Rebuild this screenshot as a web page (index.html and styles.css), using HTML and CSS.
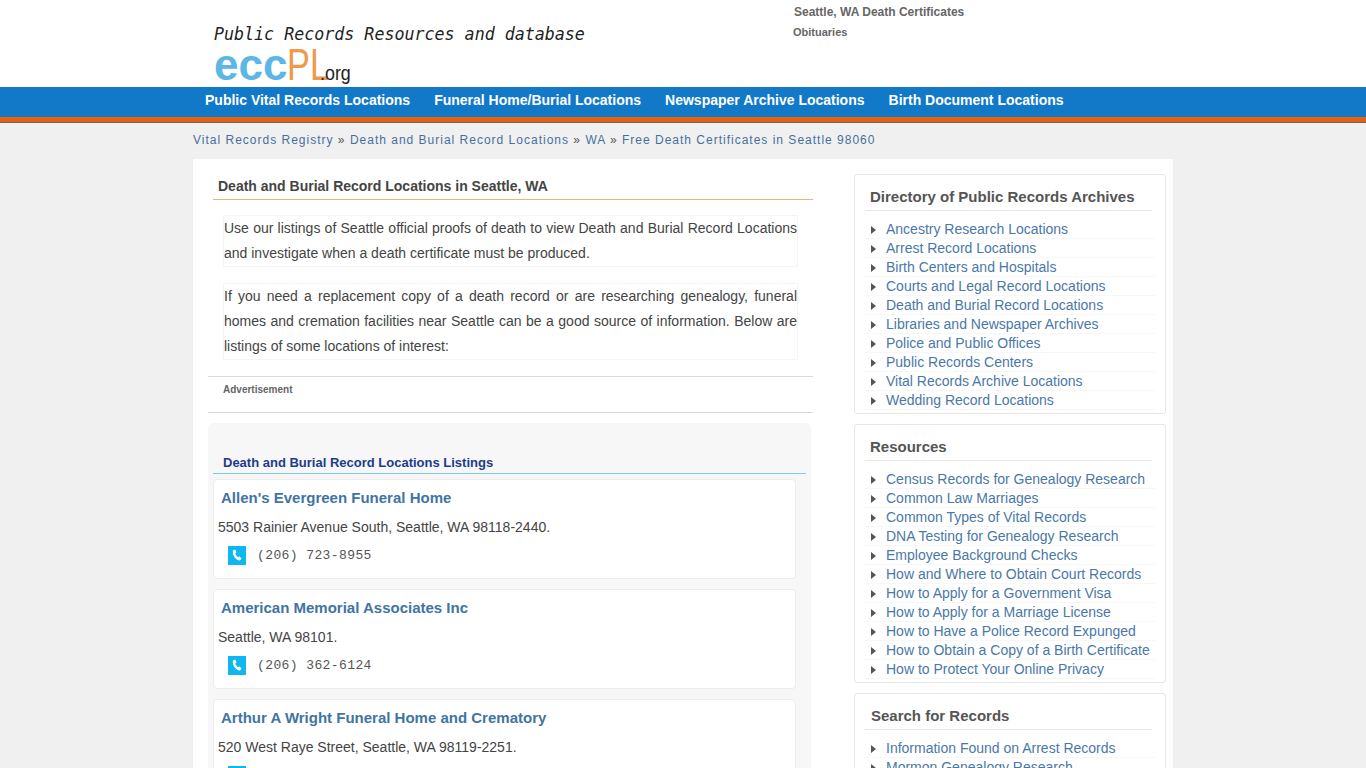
FILE: index.html
```html
<!DOCTYPE html>
<html lang="en">
<head>
    <meta charset="UTF-8">
    <title>Free Death Certificates in Seattle 98060</title>
    <link rel="stylesheet" href="styles.css">
</head>
<body>
    <div class="header">
        <div class="logo">
            <div class="logo-tag">Public Records Resources and database</div>
            <div class="logo-name"><span class="logo-ecc">ecc</span><span class="logo-pl">PL</span><span class="logo-org">.org</span></div>
        </div>
        <div class="top-links">
            <a class="top-link-a" href="#">Seattle, WA Death Certificates</a>
            <a class="top-link-b" href="#">Obituaries</a>
        </div>
    </div>

    <div class="nav">
        <div class="nav-inner">
            <a href="#">Public Vital Records Locations</a>
            <a href="#">Funeral Home/Burial Locations</a>
            <a href="#">Newspaper Archive Locations</a>
            <a href="#">Birth Document Locations</a>
        </div>
    </div>

    <div class="crumbs">
        <a href="#">Vital Records Registry</a> <span>»</span>
        <a href="#">Death and Burial Record Locations</a> <span>»</span>
        <a href="#">WA</a> <span>»</span>
        <a href="#">Free Death Certificates in Seattle 98060</a>
    </div>

    <div class="page">
        <div class="main">
            <h1 class="main-title">Death and Burial Record Locations in Seattle, WA</h1>
            <div class="intro">
                <p>Use our listings of Seattle official proofs of death to view Death and Burial Record Locations and investigate when a death certificate must be produced.</p>
            </div>
            <div class="intro">
                <p>If you need a replacement copy of a death record or are researching genealogy, funeral homes and cremation facilities near Seattle can be a good source of information. Below are listings of some locations of interest:</p>
            </div>
            <div class="ad">Advertisement</div>

            <div class="listings">
                <h2 class="listings-title">Death and Burial Record Locations Listings</h2>

                <div class="card">
                    <h3><a href="#">Allen's Evergreen Funeral Home</a></h3>
                    <div class="addr">5503 Rainier Avenue South, Seattle, WA 98118-2440.</div>
                    <div class="phone">
                        <svg class="phone-icon" viewBox="0 0 18 19"><rect width="18" height="19" fill="#0db7ef"/><path d="M5.2 4.2l2-.7 1.3 3-1.3 1c.5 1.500 1.500 2.800 2.900 3.700l1.200-.9 2.300 2.200-1.400 1.700c-.6.400-1.500.3-2.400-.2-2.800-1.600-4.600-4.300-5-7.300-.1-1.100 0-2 .4-2.500z" fill="#fff"/></svg>
                        <span>(206) 723-8955</span>
                    </div>
                </div>

                <div class="card">
                    <h3><a href="#">American Memorial Associates Inc</a></h3>
                    <div class="addr">Seattle, WA 98101.</div>
                    <div class="phone">
                        <svg class="phone-icon" viewBox="0 0 18 19"><rect width="18" height="19" fill="#0db7ef"/><path d="M5.2 4.2l2-.7 1.300 3-1.300 1c.5 1.500 1.500 2.800 2.900 3.700l1.200-.9 2.300 2.200-1.400 1.700c-.6.400-1.500.3-2.400-.2-2.800-1.600-4.600-4.300-5-7.300-.1-1.100 0-2 .4-2.500z" fill="#fff"/></svg>
                        <span>(206) 362-6124</span>
                    </div>
                </div>

                <div class="card">
                    <h3><a href="#">Arthur A Wright Funeral Home and Crematory</a></h3>
                    <div class="addr">520 West Raye Street, Seattle, WA 98119-2251.</div>
                    <div class="phone">
                        <svg class="phone-icon" viewBox="0 0 18 19"><rect width="18" height="19" fill="#0db7ef"/><path d="M5.2 4.2l2-.7 1.300 3-1.300 1c.5 1.500 1.500 2.800 2.900 3.700l1.200-.9 2.300 2.200-1.400 1.700c-.6.400-1.500.3-2.400-.2-2.800-1.600-4.600-4.300-5-7.300-.1-1.100 0-2 .4-2.500z" fill="#fff"/></svg>
                        <span>(206) 282-5500</span>
                    </div>
                </div>
            </div>
        </div>

        <div class="side">
            <div class="side-box">
                <h4>Directory of Public Records Archives</h4>
                <ul>
                    <li><a href="#">Ancestry Research Locations</a></li>
                    <li><a href="#">Arrest Record Locations</a></li>
                    <li><a href="#">Birth Centers and Hospitals</a></li>
                    <li><a href="#">Courts and Legal Record Locations</a></li>
                    <li><a href="#">Death and Burial Record Locations</a></li>
                    <li><a href="#">Libraries and Newspaper Archives</a></li>
                    <li><a href="#">Police and Public Offices</a></li>
                    <li><a href="#">Public Records Centers</a></li>
                    <li><a href="#">Vital Records Archive Locations</a></li>
                    <li><a href="#">Wedding Record Locations</a></li>
                </ul>
            </div>
            <div class="side-box">
                <h4>Resources</h4>
                <ul>
                    <li><a href="#">Census Records for Genealogy Research</a></li>
                    <li><a href="#">Common Law Marriages</a></li>
                    <li><a href="#">Common Types of Vital Records</a></li>
                    <li><a href="#">DNA Testing for Genealogy Research</a></li>
                    <li><a href="#">Employee Background Checks</a></li>
                    <li><a href="#">How and Where to Obtain Court Records</a></li>
                    <li><a href="#">How to Apply for a Government Visa</a></li>
                    <li><a href="#">How to Apply for a Marriage License</a></li>
                    <li><a href="#">How to Have a Police Record Expunged</a></li>
                    <li><a href="#">How to Obtain a Copy of a Birth Certificate</a></li>
                    <li><a href="#">How to Protect Your Online Privacy</a></li>
                </ul>
            </div>
            <div class="side-box">
                <h4 class="side-search">Search for Records</h4>
                <ul>
                    <li><a href="#">Information Found on Arrest Records</a></li>
                    <li><a href="#">Mormon Genealogy Research</a></li>
                </ul>
            </div>
        </div>
    </div>
</body>
</html>
```

FILE: styles.css
```css
* {
    margin: 0;
    padding: 0;
    box-sizing: border-box;
}

html, body {
    height: 768px;
    overflow: hidden;
}

body {
    font-family: "Liberation Sans", Arial, sans-serif;
    background: #f0f0f0;
    color: #444;
}

a {
    text-decoration: none;
}

/* Header */
.header {
    height: 87px;
    background: #fff;
    padding-left: 193px;
    display: flex;
}

.logo {
    width: 600px;
    padding: 22px 0 0 21px;
}

.logo-tag {
    font-family: "DejaVu Sans Mono", monospace;
    font-style: italic;
    font-size: 18px;
    line-height: 24px;
    width: 340px;
    white-space: nowrap;
    color: #222;
    transform: scaleX(0.925);
    transform-origin: left center;
}

.logo-name {
    display: flex;
    align-items: baseline;
    height: 40px;
    line-height: 40px;
    margin-top: -1px;
    white-space: nowrap;
}

.logo-ecc {
    font-size: 44px;
    font-weight: bold;
    color: #5cb6e6;
}

.logo-pl {
    font-size: 44px;
    color: #f0994a;
    transform: scaleX(0.78);
    transform-origin: left center;
    width: 33px;
}

.logo-org {
    font-size: 21px;
    color: #222;
    transform: scaleX(0.85);
    transform-origin: left center;
}

.top-links a {
    display: block;
    font-weight: bold;
    color: #666;
}

.top-link-a {
    font-size: 12px;
    line-height: 14px;
    margin: 5px 0 0 1px;
}

.top-link-b {
    font-size: 11px;
    line-height: 13px;
    margin-top: 7px;
}

/* Nav */
.nav {
    height: 36px;
    background: #1279c9;
    border-bottom: 1px solid #666;
    border-bottom-width: 1px;
    box-shadow: inset 0 -5px 0 #e8600f;
}

.nav-inner {
    padding: 5px 0 0 205px;
    display: flex;
    gap: 24px;
}

.nav a {
    color: #fff;
    font-size: 14px;
    font-weight: bold;
    line-height: 17px;
}

/* Breadcrumbs */
.crumbs {
    height: 36px;
    padding: 9px 0 0 193px;
    font-size: 12px;
    line-height: 16px;
    letter-spacing: 1px;
    color: #555;
}

.crumbs a {
    color: #44709f;
}

/* Page */
.page {
    width: 980px;
    margin-left: 193px;
    background: #fff;
    display: flex;
    height: 700px;
    box-shadow: 0 0 2px #e8e8e8;
}

.main {
    width: 661px;
    padding: 15px 0 0 15px;
}

.main-title {
    width: 600px;
    margin-left: 5px;
    margin-bottom: 15px;
    height: 26px;
    padding-left: 5px;
    font-size: 14px;
    line-height: 24px;
    font-weight: bold;
    color: #444;
    border-bottom: 1px solid #efb67a;
    margin-left: 5px;
}

.intro {
    width: 575px;
    margin-left: 15px;
    margin-bottom: 16px;
    border: 1px solid #f4f4f4;
    border-left-color: #f4f4f4;
    border-right-color: #f4f4f4;
}

.intro p {
    font-size: 14px;
    line-height: 25px;
    text-align: justify;
    color: #444;
}

.ad {
    width: 605px;
    height: 37px;
    margin-bottom: 10px;
    padding: 6px 0 0 15px;
    border-top: 1px solid #d9d9d9;
    border-bottom: 1px solid #d9d9d9;
    font-size: 10px;
    line-height: 14px;
    font-weight: bold;
    color: #666;
    margin-top: 0;
}

.listings {
    width: 603px;
    height: 400px;
    background: #f7f7f7;
    border-radius: 6px;
    padding: 5px 0 0 5px;
}

.listings-title {
    width: 593px;
    height: 46px;
    padding: 26px 0 0 10px;
    font-size: 13px;
    line-height: 17px;
    font-weight: bold;
    color: #1d3c8c;
    border-bottom: 1px solid #82cbe8;
    margin-bottom: 5px;
}

.card {
    width: 583px;
    height: 100px;
    margin-bottom: 10px;
    background: #fff;
    border: 1px solid #ececec;
    border-radius: 4px;
    padding: 9px 0 0 4px;
}

.card h3 {
    font-size: 15px;
    line-height: 18px;
    font-weight: bold;
    padding-left: 3px;
}

.card h3 a {
    color: #3f74a3;
}

.addr {
    margin-top: 10px;
    font-size: 14px;
    line-height: 20px;
    color: #444;
}

.phone {
    display: flex;
    align-items: center;
    gap: 11px;
    margin: 9px 0 0 10px;
}

.phone-icon {
    width: 18px;
    height: 19px;
}

.phone span {
    font-family: "Liberation Mono", monospace;
    font-size: 13px;
    letter-spacing: 0.4px;
    color: #555;
}

/* Sidebar */
.side {
    width: 312px;
    margin-left: 0;
    padding-top: 15px;
}

.side-box {
    width: 312px;
    background: #fff;
    border: 1px solid #e6e6e6;
    border-radius: 3px;
    margin-bottom: 10px;
    padding: 0 0 3px 10px;
}

.side-box h4 {
    width: 287px;
    height: 36px;
    padding: 13px 0 0 5px;
    font-size: 15px;
    line-height: 18px;
    font-weight: bold;
    color: #555;
    border-bottom: 1px solid #e6e6e6;
    margin-bottom: 9px;
}

.side-box .side-search {
    padding-left: 6px;
    font-size: 15px;
}

.side-box li {
    list-style: none;
    height: 19px;
    width: 290px;
    padding-left: 21px;
    font-size: 14px;
    line-height: 18px;
    border-bottom: 1px solid #f7f7f7;
    position: relative;
}

.side-box li::before {
    content: "";
    position: absolute;
    left: 6px;
    top: 6px;
    border-left: 5px solid #555;
    border-top: 4px solid transparent;
    border-bottom: 4px solid transparent;
}

.side-box li a {
    color: #4a78a8;
}
```
